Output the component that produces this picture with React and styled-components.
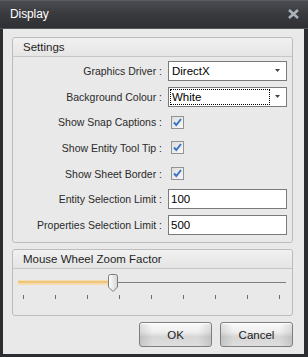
import React from 'react';
import styled, { createGlobalStyle } from 'styled-components';

const GlobalStyle = createGlobalStyle`
  html, body {
    margin: 0;
    padding: 0;
    background: #2c2d31;
  }
  * {
    box-sizing: border-box;
  }
`;

// Window frame
const Window = styled.div`
  width: 308px;
  height: 357px;
  display: flex;
  flex-direction: column;
  background: #2c2d31;
  font-family: 'Liberation Sans', Arial, sans-serif;
`;

const TitleBar = styled.div`
  height: 29px;
  display: flex;
  align-items: center;
  justify-content: space-between;
  padding: 0 9px 1px 10px;
  background: linear-gradient(#4b4c51 0%, #3a3b3f 45%, #2f3034 100%);
  border-top: 1px solid #5a5b60;
  border-bottom: 1px solid #55565b;

  .title {
    color: #ffffff;
    font-size: 12px;
    letter-spacing: -0.1px;
  }
`;

const Body = styled.div`
  flex: 1;
  margin: 0 4px 3px 3px;
  background: #e9e9e9;
  padding: 8px 11px 7px 9px;
  display: flex;
  flex-direction: column;
`;

// Group box with header
const Group = styled.div`
  border: 1px solid #bcbcbc;
  border-radius: 3px;
  margin-bottom: 6px;
  background: #e9e9e9;
`;

const GroupHeader = styled.div`
  height: 19px;
  display: flex;
  align-items: center;
  padding-left: 10px;
  font-size: 11.5px;
  color: #1f1f1f;
  background: linear-gradient(#f1f1f1, #e5e5e5);
  border-bottom: 1px solid #c6c6c6;
  border-radius: 3px 3px 0 0;
`;

const SettingsGrid = styled.div`
  display: flex;
  flex-direction: column;
  gap: 5.7px;
  padding: 4px 0 7px 0;
`;

const Row = styled.div`
  height: 20px;
  display: flex;
  align-items: center;
  gap: 6px;
`;

const Label = styled.div`
  width: 149px;
  text-align: right;
  font-size: 10.5px;
  color: #2a2a2a;
  white-space: nowrap;
`;

const Field = styled.div`
  width: 119px;
  height: 20px;
  display: flex;
  align-items: center;
`;

const Combo = styled.div`
  width: 100%;
  height: 20px;
  background: #ffffff;
  border: 1px solid #7a7a7a;
  display: flex;
  align-items: center;
  padding: 1px;
  font-size: 11.5px;
  color: #000;

  .value {
    flex: 1;
    height: 100%;
    display: flex;
    align-items: center;
    padding-left: 1px;
    border: 1px dotted ${({ focused }) => (focused ? '#000' : 'transparent')};
  }
  .arrow {
    width: 15px;
    display: flex;
    justify-content: center;
  }
`;

const TextInput = styled.div`
  width: 100%;
  height: 20px;
  background: #ffffff;
  border: 1px solid #7a7a7a;
  display: flex;
  align-items: center;
  padding-left: 2px;
  font-size: 11.5px;
  color: #000;
`;

const CheckBox = styled.div`
  width: 13px;
  height: 13px;
  margin-left: 3px;
  border: 1px solid #939393;
  background: linear-gradient(135deg, #dedede, #f8f8f8);
  display: flex;
  align-items: center;
  justify-content: center;
`;

// Slider
const SliderArea = styled.div`
  height: 46px;
  padding: 5px 6px 0 5px;
`;

const Track = styled.div`
  position: relative;
  height: 18px;

  .line {
    position: absolute;
    left: 0;
    right: 0;
    top: 8px;
    height: 1px;
    background: #7d7d7d;
  }
  .fill {
    position: absolute;
    left: 0;
    top: 6px;
    height: 5px;
    background: #f4dcae;
  }
  .fill::after {
    content: '';
    position: absolute;
    left: 0;
    right: 0;
    top: 1px;
    height: 2px;
    background: #efc57a;
  }
  .thumb {
    position: absolute;
    top: 0;
    width: 10px;
    height: 18px;
  }
`;

const Ticks = styled.div`
  display: flex;
  justify-content: space-between;
  padding: 0 6px 0 5px;
  margin-top: 3px;
`;

const Tick = styled.div`
  width: 1px;
  height: 4px;
  background: #6e6e6e;
`;

const Buttons = styled.div`
  display: flex;
  justify-content: flex-end;
  gap: 8px;
`;

const Button = styled.button`
  width: 73px;
  height: 25px;
  font-family: 'Liberation Sans', Arial, sans-serif;
  font-size: 11.5px;
  color: #1a1a1a;
  border: 1px solid #7e7e7e;
  border-radius: 3px;
  background:
    linear-gradient(90deg, rgba(0,0,0,0.10), rgba(0,0,0,0) 18%, rgba(0,0,0,0) 82%, rgba(0,0,0,0.10)),
    linear-gradient(#fbfbfb 0%, #eeeeee 40%, #d6d6d6 60%, #dedede 100%);
  box-shadow: inset 0 1px 0 #ffffff;
  padding: 0;
`;

const DropArrow = () => (
  <svg width="5" height="3" viewBox="0 0 5 3">
    <path d="M0 0h5L2.5 3z" fill="#444" />
  </svg>
);

const Check = () => (
  <svg width="11" height="11" viewBox="0 0 11 11">
    <path d="M2 5.5L4.3 8L9 2" stroke="#3b74c4" strokeWidth="2" fill="none" />
  </svg>
);

const CloseIcon = () => (
  <svg width="11" height="10" viewBox="0 0 11 10">
    <path d="M1 1l9 8M10 1l-9 8" stroke="#aab3bc" strokeWidth="2.6" strokeLinecap="butt" />
  </svg>
);

const Thumb = ({ left }) => (
  <svg className="thumb" style={{ left }} viewBox="0 0 10 18">
    <defs>
      <linearGradient id="tg" x1="0" x2="1" y1="0" y2="0">
        <stop offset="0" stopColor="#ffffff" />
        <stop offset="1" stopColor="#d4d4d4" />
      </linearGradient>
    </defs>
    <path d="M0.5 2.5Q0.5 0.5 2.5 0.5H7.5Q9.5 0.5 9.5 2.5V13L5 17.5L0.5 13Z" fill="url(#tg)" stroke="#7b7b7b" />
  </svg>
);

const rows = [
  { label: 'Graphics Driver :', type: 'combo', value: 'DirectX' },
  { label: 'Background Colour :', type: 'combo', value: 'White', focused: true },
  { label: 'Show Snap Captions :', type: 'check' },
  { label: 'Show Entity Tool Tip :', type: 'check' },
  { label: 'Show Sheet Border :', type: 'check' },
  { label: 'Entity Selection Limit :', type: 'text', value: '100' },
  { label: 'Properties Selection Limit :', type: 'text', value: '500' },
];

const renderField = (row) => {
  if (row.type === 'combo') {
    return (
      <Combo focused={row.focused}>
        <div className="value">{row.value}</div>
        <div className="arrow"><DropArrow /></div>
      </Combo>
    );
  }
  if (row.type === 'check') {
    return <CheckBox><Check /></CheckBox>;
  }
  return <TextInput>{row.value}</TextInput>;
};

export default function App() {
  const thumbLeft = 90;
  return (
    <>
      <GlobalStyle />
      <Window>
        <TitleBar>
          <span className="title">Display</span>
          <CloseIcon />
        </TitleBar>
        <Body>
          <Group>
            <GroupHeader>Settings</GroupHeader>
            <SettingsGrid>
              {rows.map((row, i) => (
                <Row key={i}>
                  <Label>{row.label}</Label>
                  <Field>{renderField(row)}</Field>
                </Row>
              ))}
            </SettingsGrid>
          </Group>

          <Group>
            <GroupHeader>Mouse Wheel Zoom Factor</GroupHeader>
            <SliderArea>
              <Track>
                <div className="line" />
                <div className="fill" style={{ width: thumbLeft }} />
                <Thumb left={thumbLeft} />
              </Track>
              <Ticks>
                {Array.from({ length: 9 }).map((_, i) => <Tick key={i} />)}
              </Ticks>
            </SliderArea>
          </Group>

          <Buttons>
            <Button>OK</Button>
            <Button>Cancel</Button>
          </Buttons>
        </Body>
      </Window>
    </>
  );
}
